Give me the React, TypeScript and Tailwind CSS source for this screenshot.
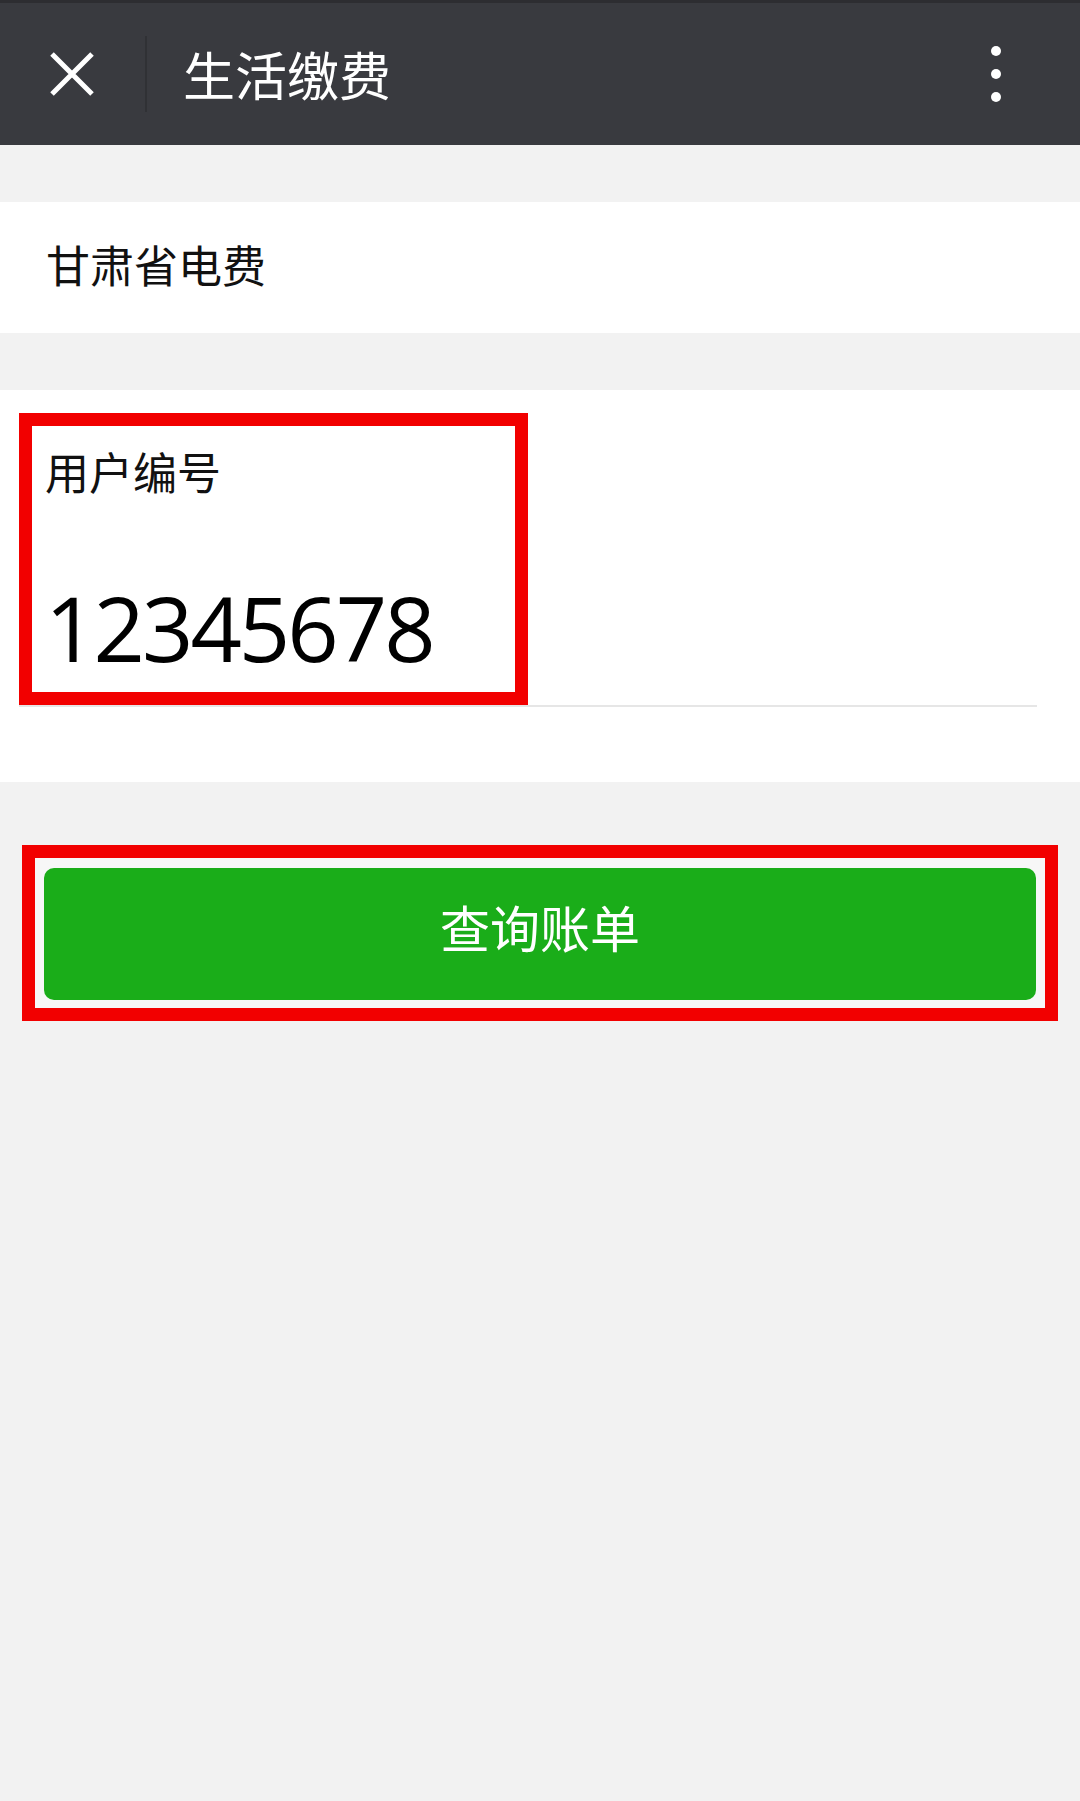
import React from 'react';

const cjk = '"Noto Sans CJK SC", "Noto Sans", sans-serif';

function CloseIcon() {
  return (
    <svg width="48" height="48" viewBox="0 0 48 48" className="block">
      <path d="M4 4 L44 44 M44 4 L4 44" stroke="#ffffff" strokeWidth="5" strokeLinecap="butt" />
    </svg>
  );
}

function MoreIcon() {
  return (
    <div className="flex flex-col items-center gap-[13px]">
      <span className="w-[10px] h-[10px] rounded-full bg-white" />
      <span className="w-[10px] h-[10px] rounded-full bg-white" />
      <span className="w-[10px] h-[10px] rounded-full bg-white" />
    </div>
  );
}

export default function App() {
  return (
    <div className="w-[1080px] min-h-[1801px] bg-[#f2f2f2]" style={{ fontFamily: cjk }}>
      {/* top bar */}
      <div className="h-[145px] bg-[#393a3f] border-t-[3px] border-[#2d2d31] flex items-center">
        <div className="pl-[48px]">
          <CloseIcon />
        </div>
        <div className="ml-[49px] w-[2px] h-[76px] bg-[#303135]" />
        <h1 className="ml-[36px] text-[52px] leading-none text-white">生活缴费</h1>
        <div className="ml-auto mr-[79px]">
          <MoreIcon />
        </div>
      </div>

      {/* biller */}
      <div className="mt-[57px] h-[131px] bg-white flex items-center px-[46px] pb-[8px]">
        <span className="text-[44px] leading-none text-[#111]">甘肃省电费</span>
      </div>

      {/* account input */}
      <div className="mt-[57px] bg-white pt-[23px] pb-[75px] pl-[19px] pr-[43px]">
        <div className="w-[509px] border-[13px] border-[#f20000] pl-[13px] pt-[23px] pb-[20px]">
          <div className="text-[44px] leading-none text-[#111]">用户编号</div>
          <div
            className="mt-[89px] text-[90px] leading-none text-black tracking-[-3px]"
            style={{ fontFamily: '"Open Sans", "Liberation Sans", sans-serif' }}
          >
            12345678
          </div>
        </div>
        <div className="h-[2px] bg-[#e6e6e6]" />
      </div>

      {/* query button */}
      <div className="mt-[63px] mx-[22px] border-[13px] border-[#f20000] bg-[#f7f7f7] px-[9px] pt-[10px] pb-[8px]">
        <button className="w-full h-[132px] rounded-[10px] bg-[#1aad19] flex items-center justify-center pb-[16px]">
          <span className="text-[50px] leading-none text-white" style={{ fontFamily: cjk }}>
            查询账单
          </span>
        </button>
      </div>
    </div>
  );
}
